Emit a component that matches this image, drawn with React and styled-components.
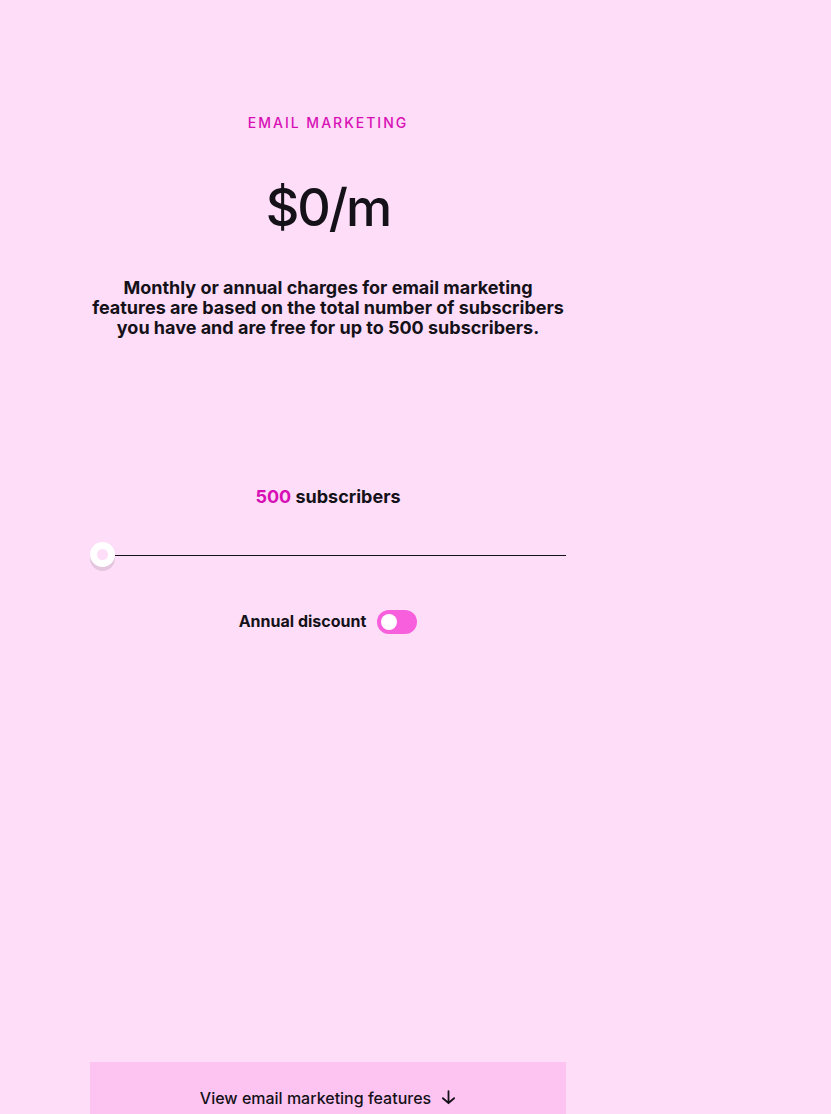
import React, { useState } from 'react';
import styled, { createGlobalStyle } from 'styled-components';

const GlobalStyle = createGlobalStyle`
  * {
    box-sizing: border-box;
  }

  body {
    margin: 0;
    background-color: #fdddf8;
    color: #141118;
    font-family: Inter, 'Liberation Sans', sans-serif;
  }
`;

const Panel = styled.main`
  display: flex;
  flex-direction: column;
  align-items: center;
  width: calc(100% - 355px);
  min-height: 100vh;
  margin-left: 90px;
  padding-top: 113px;
  text-align: center;
`;

const Eyebrow = styled.h2`
  margin: 0;
  color: #d80fb5;
  font-size: 14px;
  font-weight: 500;
  line-height: 20px;
  letter-spacing: 2px;
  text-transform: uppercase;
`;

const Price = styled.p`
  margin: 43px 0 0;
  font-size: 52px;
  font-weight: 500;
  line-height: 64px;
  letter-spacing: -2px;
`;

const Description = styled.p`
  margin: 38px 0 0;
  font-size: 18px;
  font-weight: 700;
  line-height: 20px;
`;

const SliderLabel = styled.label`
  margin-top: 149px;
  font-size: 18px;
  font-weight: 700;
  line-height: 20px;
`;

const Count = styled.span`
  color: #d80fb5;
`;

const Slider = styled.input`
  appearance: none;
  width: 100%;
  height: 25px;
  margin: 36px 0 0;
  background: none;
  cursor: pointer;

  &::-webkit-slider-runnable-track {
    height: 1px;
    background-color: #141118;
  }

  &::-webkit-slider-thumb {
    appearance: none;
    width: 25px;
    height: 25px;
    margin-top: -13px;
    border: 7px solid #ffffff;
    border-radius: 50%;
    background-color: #fdddf8;
    box-shadow: 0 4px 0 #e4c6df;
  }
`;

const DiscountRow = styled.label`
  display: flex;
  align-items: flex-start;
  gap: 11px;
  margin-top: 42px;
  font-size: 16px;
  font-weight: 700;
  line-height: 22px;
  cursor: pointer;
`;

const Toggle = styled.input`
  appearance: none;
  display: flex;
  align-items: center;
  width: 40px;
  height: 24px;
  margin: 0;
  padding: 4px;
  border-radius: 12px;
  background-color: #f75fdc;
  cursor: pointer;

  &::before {
    content: '';
    width: 16px;
    height: 16px;
    border-radius: 50%;
    background-color: #ffffff;
  }

  &:checked {
    justify-content: flex-end;
  }
`;

const FeaturesButton = styled.button`
  display: flex;
  align-items: center;
  justify-content: center;
  gap: 11px;
  width: 100%;
  height: 52px;
  margin-top: auto;
  padding: 20px 0 0;
  border: none;
  background-color: #fdc4f1;
  color: #141118;
  font-family: inherit;
  font-size: 16px;
  font-weight: 500;
  line-height: 24px;
  cursor: pointer;
`;

const ArrowDown = () => (
  <svg
    width="14"
    height="16"
    viewBox="0 0 14 16"
    fill="none"
    stroke="currentColor"
    strokeWidth="1.8"
    strokeLinecap="round"
    aria-hidden="true"
  >
    <path d="M6.5 1.2v11.5M0.9 8.2L6.5 13l5.6-4.8" />
  </svg>
);

const App = () => {
  const [subscribers, setSubscribers] = useState(500);
  const [annual, setAnnual] = useState(false);

  return (
    <>
      <GlobalStyle />
      <Panel>
        <Eyebrow>Email marketing</Eyebrow>
        <Price>$0/m</Price>
        <Description>
          Monthly or annual charges for email marketing features are based on the total number of
          subscribers you have and are free for up to 500 subscribers.
        </Description>
        <SliderLabel htmlFor="subscribers">
          <Count>{subscribers}</Count> subscribers
        </SliderLabel>
        <Slider
          id="subscribers"
          type="range"
          min="500"
          max="100000"
          step="500"
          value={subscribers}
          onChange={(e) => setSubscribers(Number(e.target.value))}
        />
        <DiscountRow>
          Annual discount
          <Toggle type="checkbox" checked={annual} onChange={(e) => setAnnual(e.target.checked)} />
        </DiscountRow>
        <FeaturesButton type="button">
          View email marketing features
          <ArrowDown />
        </FeaturesButton>
      </Panel>
    </>
  );
};

export default App;
